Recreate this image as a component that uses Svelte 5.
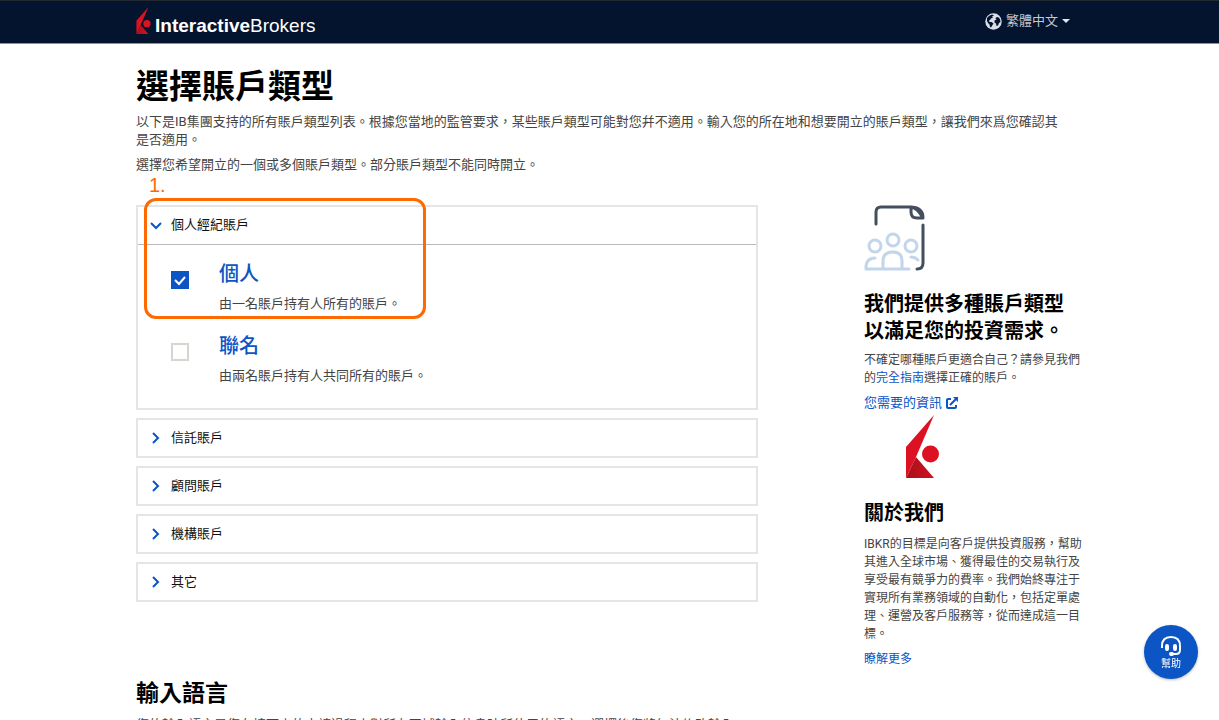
<script>
  let accounts = $state([
    { id: 'individual', name: '個人', text: '由一名賬戶持有人所有的賬戶。', checked: true },
    { id: 'joint', name: '聯名', text: '由兩名賬戶持有人共同所有的賬戶。', checked: false },
  ]);
  let open = $state(true);
  const groups = ['信託賬戶', '顧問賬戶', '機構賬戶', '其它'];
</script>

{#snippet mark()}
  <path d="M0 32 L28 0 L10 42 L0 63 Z" fill="#dc1222" />
  <path d="M10 42 L28 63 H0 Z" fill="url(#fold)" />
  <circle cx="24.500" cy="39" r="8.500" fill="#dc1222" />
{/snippet}

<div class="page">
  <header>
    <div class="wrap bar">
      <a class="brand" href="#home">
        <svg width="15" height="27" viewBox="0 0 33 63" aria-hidden="true">{@render mark()}</svg>
        <span><b>Interactive</b>Brokers</span>
      </a>
      <button class="lang" type="button">
        <svg width="17" height="17" viewBox="0 0 34 34" aria-hidden="true">
          <circle cx="17" cy="17" r="16.500" fill="#d9dde5" />
          <path d="M4 10 Q8 4 14 3 L18 5 L14 7 L16 9 L12 11 L10 14 L8 15 L9 18 L13 18 L17 21 L15 24 L12 29 L10 28 L9 23 L6 20 L4 16 Z" fill="#04142e" />
          <path d="M22 9 L26 8 L30 12 L31 18 L28 20 L26 25 L23 26 L22 21 L19 19 L19 15 L23 13 L21 11 Z" fill="#04142e" />
        </svg>
        繁體中文
        <span class="caret"></span>
      </button>
    </div>
  </header>

  <main class="wrap">
    <h1>選擇賬戶類型</h1>
    <p class="intro">以下是IB集團支持的所有賬戶類型列表。根據您當地的監管要求，某些賬戶類型可能對您幷不適用。輸入您的所在地和想要開立的賬戶類型，讓我們來爲您確認其是否適用。</p>
    <p class="intro second">選擇您希望開立的一個或多個賬戶類型。部分賬戶類型不能同時開立。</p>

    <div class="columns">
      <div class="groups">
        <section class="panel">
          <button class="head" class:open type="button" aria-expanded={open} onclick={() => (open = !open)}>
            <svg width="14" height="14" viewBox="0 0 14 14" aria-hidden="true"><path d="M2 5 L7 10 L12 5" /></svg>
            個人經紀賬戶
          </button>
          {#if open}
            <div class="options">
              {#each accounts as a (a.id)}
                <div class="option">
                  <input type="checkbox" id={a.id} bind:checked={a.checked} />
                  <div>
                    <label for={a.id}>{a.name}</label>
                    <p>{a.text}</p>
                  </div>
                </div>
              {/each}
            </div>
          {/if}
          <div class="callout"><span>1.</span></div>
        </section>
        {#each groups as g}
          <section class="panel">
            <button class="head" type="button" aria-expanded="false">
              <svg width="14" height="14" viewBox="0 0 14 14" aria-hidden="true"><path d="M4 2 L9 7 L4 12" /></svg>
              {g}
            </button>
          </section>
        {/each}
      </div>

      <aside>
        <svg class="doc" width="62" height="66" viewBox="0 0 62 66" fill="none" stroke-width="3" stroke-linecap="round" aria-hidden="true">
          <g stroke="#434f5f">
            <path d="M12 19 V7 Q12 2 17 2 H46 Q53 2 59 13 H53 Q47 13 47 7 V2 M46 2 Q59 2 59 13" stroke-linejoin="round" />
            <path d="M59 20 V58 Q59 64 53 64" />
          </g>
          <g stroke="#c2d5ea">
            <circle cx="11" cy="41" r="6" />
            <circle cx="29" cy="35" r="6" />
            <circle cx="47" cy="41" r="6" />
            <path d="M45 64 H2 V61 Q3 53 11 53 M19 63 V56 Q19 47 29 47 Q38 47 38 56 V63 M47 52 Q51 52 54 55" stroke-linejoin="round" />
          </g>
        </svg>
        <h3>我們提供多種賬戶類型<br />以滿足您的投資需求。</h3>
        <p>不確定哪種賬戶更適合自己？請參見我們的<a href="#guide">完全指南</a>選擇正確的賬戶。</p>
        <a class="need" href="#info">
          您需要的資訊
          <svg width="12" height="12" viewBox="0 0 12 12" fill="none" stroke="currentColor" stroke-width="2" aria-hidden="true">
            <path d="M5 2 H2 Q1 2 1 3 V10 Q1 11 2 11 H9 Q10 11 10 10 V8 M4 8 L10 2" />
            <path d="M7 0 H12 V5 Z" fill="currentColor" stroke="none" />
          </svg>
        </a>
        <svg class="logo" width="33" height="63" viewBox="0 0 33 63" aria-hidden="true">
          <defs>
            <linearGradient id="fold" x1="0" y1="0" x2="1" y2="0">
              <stop offset="0" stop-color="#a90f1c" />
              <stop offset="1" stop-color="#d21222" />
            </linearGradient>
          </defs>
          {@render mark()}
        </svg>
        <h3>關於我們</h3>
        <p class="about">IBKR的目標是向客戶提供投資服務，幫助其進入全球市場、獲得最佳的交易執行及享受最有競爭力的費率。我們始終專注于實現所有業務領域的自動化，包括定單處理、運營及客戶服務等，從而達成這一目標。</p>
        <a class="more" href="#about">瞭解更多</a>
      </aside>
    </div>

    <h2>輸入語言</h2>
    <p class="intro">您的輸入語言是您在接下來的申請過程中對所有區域輸入信息時所使用的語言。選擇後您將無法修改輸入</p>
  </main>

  <button class="help" type="button">
    <svg width="22" height="22" viewBox="0 0 22 22" fill="none" stroke="#fff" stroke-width="2" aria-hidden="true">
      <path d="M2 13 V11 Q2 2 11 2 Q20 2 20 11 V15 Q20 19 16 19 H12" />
      <rect x="6" y="10" width="2" height="5" rx="1" fill="#fff" />
      <rect x="14" y="10" width="2" height="5" rx="1" fill="#fff" />
      <rect x="10" y="18" width="3" height="2" rx="1" fill="#fff" />
    </svg>
    幫助
  </button>
</div>

<style>
  :global(body) {
    margin: 0;
  }
  .page {
    height: 100vh;
    overflow: hidden;
    background: #fff;
    color: #444;
    font: 13px/18px Roboto, 'Noto Sans CJK TC', sans-serif;
  }
  .page * {
    box-sizing: border-box;
  }
  h1, h2, h3, p {
    margin: 0;
  }
  h1, h2, h3 {
    color: #000;
    font-weight: 700;
  }
  a {
    color: #0b55c4;
    text-decoration: none;
  }
  button {
    border: 0;
    background: none;
    font: inherit;
    cursor: pointer;
  }
  .wrap {
    width: 100%;
    max-width: 947px;
    margin: 0 auto;
  }
  header {
    background: #04142e;
    border-top: 1px solid #222a30;
    border-bottom: 1px solid #8b93a0;
  }
  .bar {
    display: flex;
    justify-content: space-between;
    align-items: flex-start;
    height: 42px;
    padding-right: 13px;
  }
  .brand {
    display: flex;
    align-items: flex-end;
    gap: 4px;
    padding-top: 6px;
    color: #fff;
    font: 19px/16px 'Liberation Sans', Arial, sans-serif;
  }
  .lang {
    display: flex;
    align-items: center;
    gap: 4px;
    padding: 10px 0 0;
    color: #c3c8d1;
    line-height: 20px;
  }
  .caret {
    border: 4px solid transparent;
    border-top-color: #e4e7ec;
    border-bottom: 0;
  }
  h1 {
    padding-top: 23px;
    font-size: 33px;
    line-height: 40px;
  }
  .intro {
    margin-top: 6px;
    padding-right: 16px;
  }
  .second {
    margin-top: 7px;
  }
  .columns {
    display: grid;
    grid-template-columns: minmax(0, 1fr) 219px;
    gap: 106px;
    margin-top: 31px;
  }
  .groups {
    display: flex;
    flex-direction: column;
    gap: 8px;
  }
  .panel {
    position: relative;
    border: 2px solid #e5e5e5;
  }
  .head {
    display: flex;
    align-items: center;
    gap: 8px;
    width: 100%;
    height: 36px;
    padding: 0 11px 1px;
    color: #111;
    text-align: left;
  }
  .head svg {
    fill: none;
    stroke: #0b55c4;
    stroke-width: 2;
  }
  .head.open {
    height: 38px;
    padding-bottom: 2px;
    border-bottom: 1px solid #b8b8b8;
  }
  .options {
    display: grid;
    gap: 12px;
    padding: 14px 33px 17px;
  }
  .option {
    display: flex;
    gap: 30px;
    height: 60px;
  }
  .option input {
    appearance: none;
    width: 18px;
    height: 18px;
    margin: 12px 0 0;
    border: 2px solid #d8d4cf;
    background: #fff;
  }
  .option input:checked {
    border: 0;
    background: #0b55c4 url("data:image/svg+xml,%3Csvg xmlns='http://www.w3.org/2000/svg' viewBox='0 0 18 18'%3E%3Cpath d='M4 9l4 4 6-7' fill='none' stroke='white' stroke-width='2'/%3E%3C/svg%3E");
  }
  .option label {
    display: block;
    color: #0b55c4;
    font-size: 20px;
    font-weight: 500;
    line-height: 30px;
  }
  .option p {
    margin-top: 6px;
  }
  .callout {
    position: absolute;
    top: -9px;
    left: 6px;
    width: 282px;
    height: 121px;
    border: 3px solid #ff6a00;
    border-radius: 12px;
    pointer-events: none;
  }
  .callout span {
    position: absolute;
    top: -28px;
    left: 2px;
    color: #ff6a00;
    font: 20px/24px 'Liberation Sans', Arial, sans-serif;
  }
  aside {
    display: flex;
    flex-direction: column;
    align-items: flex-start;
  }
  aside h3 {
    font-size: 20px;
    line-height: 27px;
  }
  aside p {
    margin-top: 6px;
    font-size: 12px;
  }
  .doc {
    margin-bottom: 20px;
  }
  .need {
    display: flex;
    align-items: center;
    gap: 4px;
    margin-top: 7px;
  }
  .logo {
    margin: 3px 0 22px 42px;
  }
  .about {
    margin-top: 8px;
  }
  .more {
    margin-top: 7px;
    font-size: 12px;
  }
  h2 {
    margin-top: 10px;
    font-size: 23px;
    line-height: 32px;
  }
  .help {
    position: fixed;
    right: 21px;
    bottom: 41px;
    display: flex;
    flex-direction: column;
    align-items: center;
    width: 54px;
    height: 54px;
    padding: 10px 0 0;
    border-radius: 50%;
    background: #0b55c4;
    box-shadow: 0 1px 3px #0004;
    color: #fff;
    font-size: 10px;
    line-height: 14px;
  }
</style>
